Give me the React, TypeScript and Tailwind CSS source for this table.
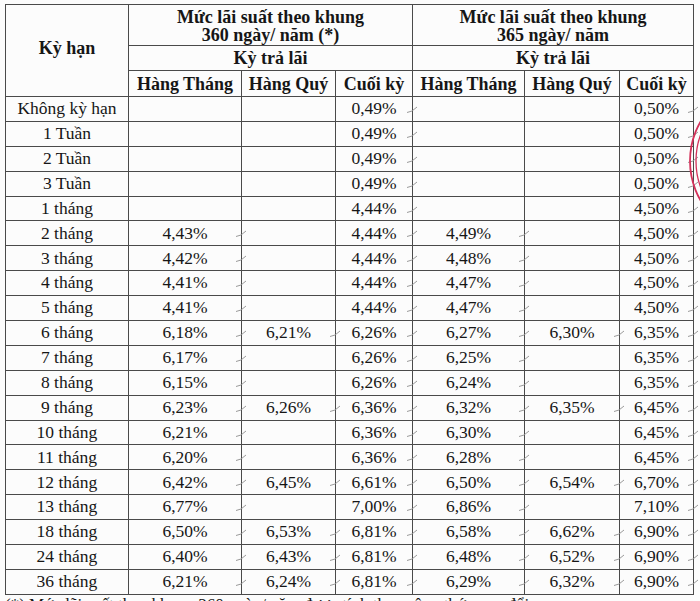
import React from "react";

const rows: string[][] = [
  ["Không kỳ hạn", "", "", "0,49%", "", "", "0,50%"],
  ["1 Tuần", "", "", "0,49%", "", "", "0,50%"],
  ["2 Tuần", "", "", "0,49%", "", "", "0,50%"],
  ["3 Tuần", "", "", "0,49%", "", "", "0,50%"],
  ["1 tháng", "", "", "4,44%", "", "", "4,50%"],
  ["2 tháng", "4,43%", "", "4,44%", "4,49%", "", "4,50%"],
  ["3 tháng", "4,42%", "", "4,44%", "4,48%", "", "4,50%"],
  ["4 tháng", "4,41%", "", "4,44%", "4,47%", "", "4,50%"],
  ["5 tháng", "4,41%", "", "4,44%", "4,47%", "", "4,50%"],
  ["6 tháng", "6,18%", "6,21%", "6,26%", "6,27%", "6,30%", "6,35%"],
  ["7 tháng", "6,17%", "", "6,26%", "6,25%", "", "6,35%"],
  ["8 tháng", "6,15%", "", "6,26%", "6,24%", "", "6,35%"],
  ["9 tháng", "6,23%", "6,26%", "6,36%", "6,32%", "6,35%", "6,45%"],
  ["10 tháng", "6,21%", "", "6,36%", "6,30%", "", "6,45%"],
  ["11 tháng", "6,20%", "", "6,36%", "6,28%", "", "6,45%"],
  ["12 tháng", "6,42%", "6,45%", "6,61%", "6,50%", "6,54%", "6,70%"],
  ["13 tháng", "6,77%", "", "7,00%", "6,86%", "", "7,10%"],
  ["18 tháng", "6,50%", "6,53%", "6,81%", "6,58%", "6,62%", "6,90%"],
  ["24 tháng", "6,40%", "6,43%", "6,81%", "6,48%", "6,52%", "6,90%"],
  ["36 tháng", "6,21%", "6,24%", "6,81%", "6,29%", "6,32%", "6,90%"],
];

// pencil check marks left beside the printed values
const Tick = () => (
  <svg
    width="12"
    height="10"
    viewBox="0 0 12 10"
    className="absolute right-[-6px] top-[8px]"
  >
    <path d="M1 7.5 L6 6 L11 2" stroke="#8f8f8f" strokeWidth="0.9" fill="none" />
  </svg>
);

const th = "border border-[#4a4a4a] font-bold text-center p-0";
const td = "border border-[#4a4a4a] text-center p-0 h-[24.9px] leading-none";

export default function App() {
  return (
    <div className="relative w-[700px] h-[601px] overflow-hidden bg-[#fcfcfc] text-[#161616] [font-family:Liberation_Serif,serif]">
      <div className="pt-[4px] pl-[5px]">
        <table className="border-collapse table-fixed w-[688px]">
          <colgroup>
            <col className="w-[123px]" />
            <col className="w-[113px]" />
            <col className="w-[94px]" />
            <col className="w-[77px]" />
            <col className="w-[112px]" />
            <col className="w-[95px]" />
            <col className="w-[74px]" />
          </colgroup>
          <thead className="text-[18px]">
            <tr className="h-[41px]">
              <th rowSpan={3} className={`${th} leading-none pb-[6px]`}>
                Kỳ hạn
              </th>
              <th colSpan={3} className={`${th} leading-[18px] pt-[1px]`}>
                Mức lãi suất theo khung
                <br />
                360 ngày/ năm (*)
              </th>
              <th colSpan={3} className={`${th} leading-[18px] pt-[1px]`}>
                Mức lãi suất theo khung
                <br />
                365 ngày/ năm
              </th>
            </tr>
            <tr className="h-[25px]">
              <th colSpan={3} className={`${th} leading-none`}>
                Kỳ trả lãi
              </th>
              <th colSpan={3} className={`${th} leading-none`}>
                Kỳ trả lãi
              </th>
            </tr>
            <tr className="h-[26px]">
              <th className={`${th} leading-none`}>Hàng Tháng</th>
              <th className={`${th} leading-none`}>Hàng Quý</th>
              <th className={`${th} leading-none`}>Cuối kỳ</th>
              <th className={`${th} leading-none`}>Hàng Tháng</th>
              <th className={`${th} leading-none`}>Hàng Quý</th>
              <th className={`${th} leading-none`}>Cuối kỳ</th>
            </tr>
          </thead>
          <tbody className="text-[17.5px]">
            {rows.map((r) => (
              <tr key={r[0]}>
                {r.map((v, i) => (
                  <td key={i} className={`${td} relative`}>
                    {v}
                    {i > 0 && v !== "" && <Tick />}
                  </td>
                ))}
              </tr>
            ))}
          </tbody>
        </table>
        <p className="text-[17px] leading-[20px] whitespace-nowrap">
          (*) Mức lãi suất theo khung 360 ngày/ năm được tính theo công thức quy đổi
        </p>
      </div>

      {/* red stamp just reaching into the right margin */}
      <svg
        width="20"
        height="120"
        viewBox="680 100 20 120"
        className="absolute right-0 top-[100px]"
      >
        <circle cx="769" cy="161" r="79" stroke="#d4315a" strokeWidth="1.8" fill="none" />
        <circle cx="769" cy="161" r="73" stroke="#d4315a" strokeWidth="1.3" fill="none" />
      </svg>
    </div>
  );
}
